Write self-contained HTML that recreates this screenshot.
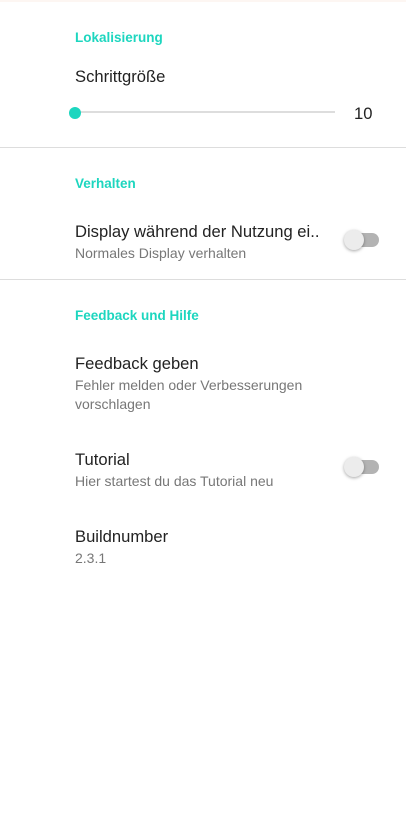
<!DOCTYPE html>
<html><head><meta charset="utf-8"><style>
body{margin:0;width:406px;height:834px;background:#fff;font-family:"Liberation Sans",Roboto,sans-serif;position:relative;overflow:hidden}
.a{position:absolute;white-space:nowrap}
.h{color:#1dd6bf;font-size:13.5px;font-weight:bold;left:75px}
.t{color:#222;font-size:16.6px;left:75px}
.s{color:#777;font-size:14px;left:75px}
.sep{position:absolute;left:0;width:406px;height:1px;background:#ddd}
.tr{position:absolute;left:345px;width:34px;height:14px;border-radius:7px;background:#b3b3b3}
.th{position:absolute;left:344px;width:20px;height:20px;border-radius:50%;background:#ececec;box-shadow:0 1px 3px rgba(0,0,0,.35)}
</style></head><body>
<div style="position:absolute;top:0;left:0;width:406px;height:2px;background:#fdf6f2"></div>
<div class="a h" style="top:30px">Lokalisierung</div>
<div class="a t" style="top:67px">Schrittgröße</div>
<div style="position:absolute;left:75px;top:111px;width:260px;height:2px;background:#ddd"></div>
<div style="position:absolute;left:69px;top:107px;width:12px;height:12px;border-radius:50%;background:#1dd6bf"></div>
<div class="a" style="left:354px;top:104px;font-size:16.6px;color:#222">10</div>
<div class="sep" style="top:147px"></div>
<div class="a h" style="top:176px">Verhalten</div>
<div class="a t" style="top:222px">Display während der Nutzung ei..</div>
<div class="a s" style="top:245px">Normales Display verhalten</div>
<div class="tr" style="top:233px"></div><div class="th" style="top:230px"></div>
<div class="sep" style="top:279px"></div>
<div class="a h" style="top:308px">Feedback und Hilfe</div>
<div class="a t" style="top:354px">Feedback geben</div>
<div class="a s" style="top:377px">Fehler melden oder Verbesserungen</div>
<div class="a s" style="top:396px">vorschlagen</div>
<div class="a t" style="top:450px">Tutorial</div>
<div class="a s" style="top:473px">Hier startest du das Tutorial neu</div>
<div class="tr" style="top:460px"></div><div class="th" style="top:457px"></div>
<div class="a t" style="top:527px">Buildnumber</div>
<div class="a s" style="top:550px">2.3.1</div>
</body></html>
